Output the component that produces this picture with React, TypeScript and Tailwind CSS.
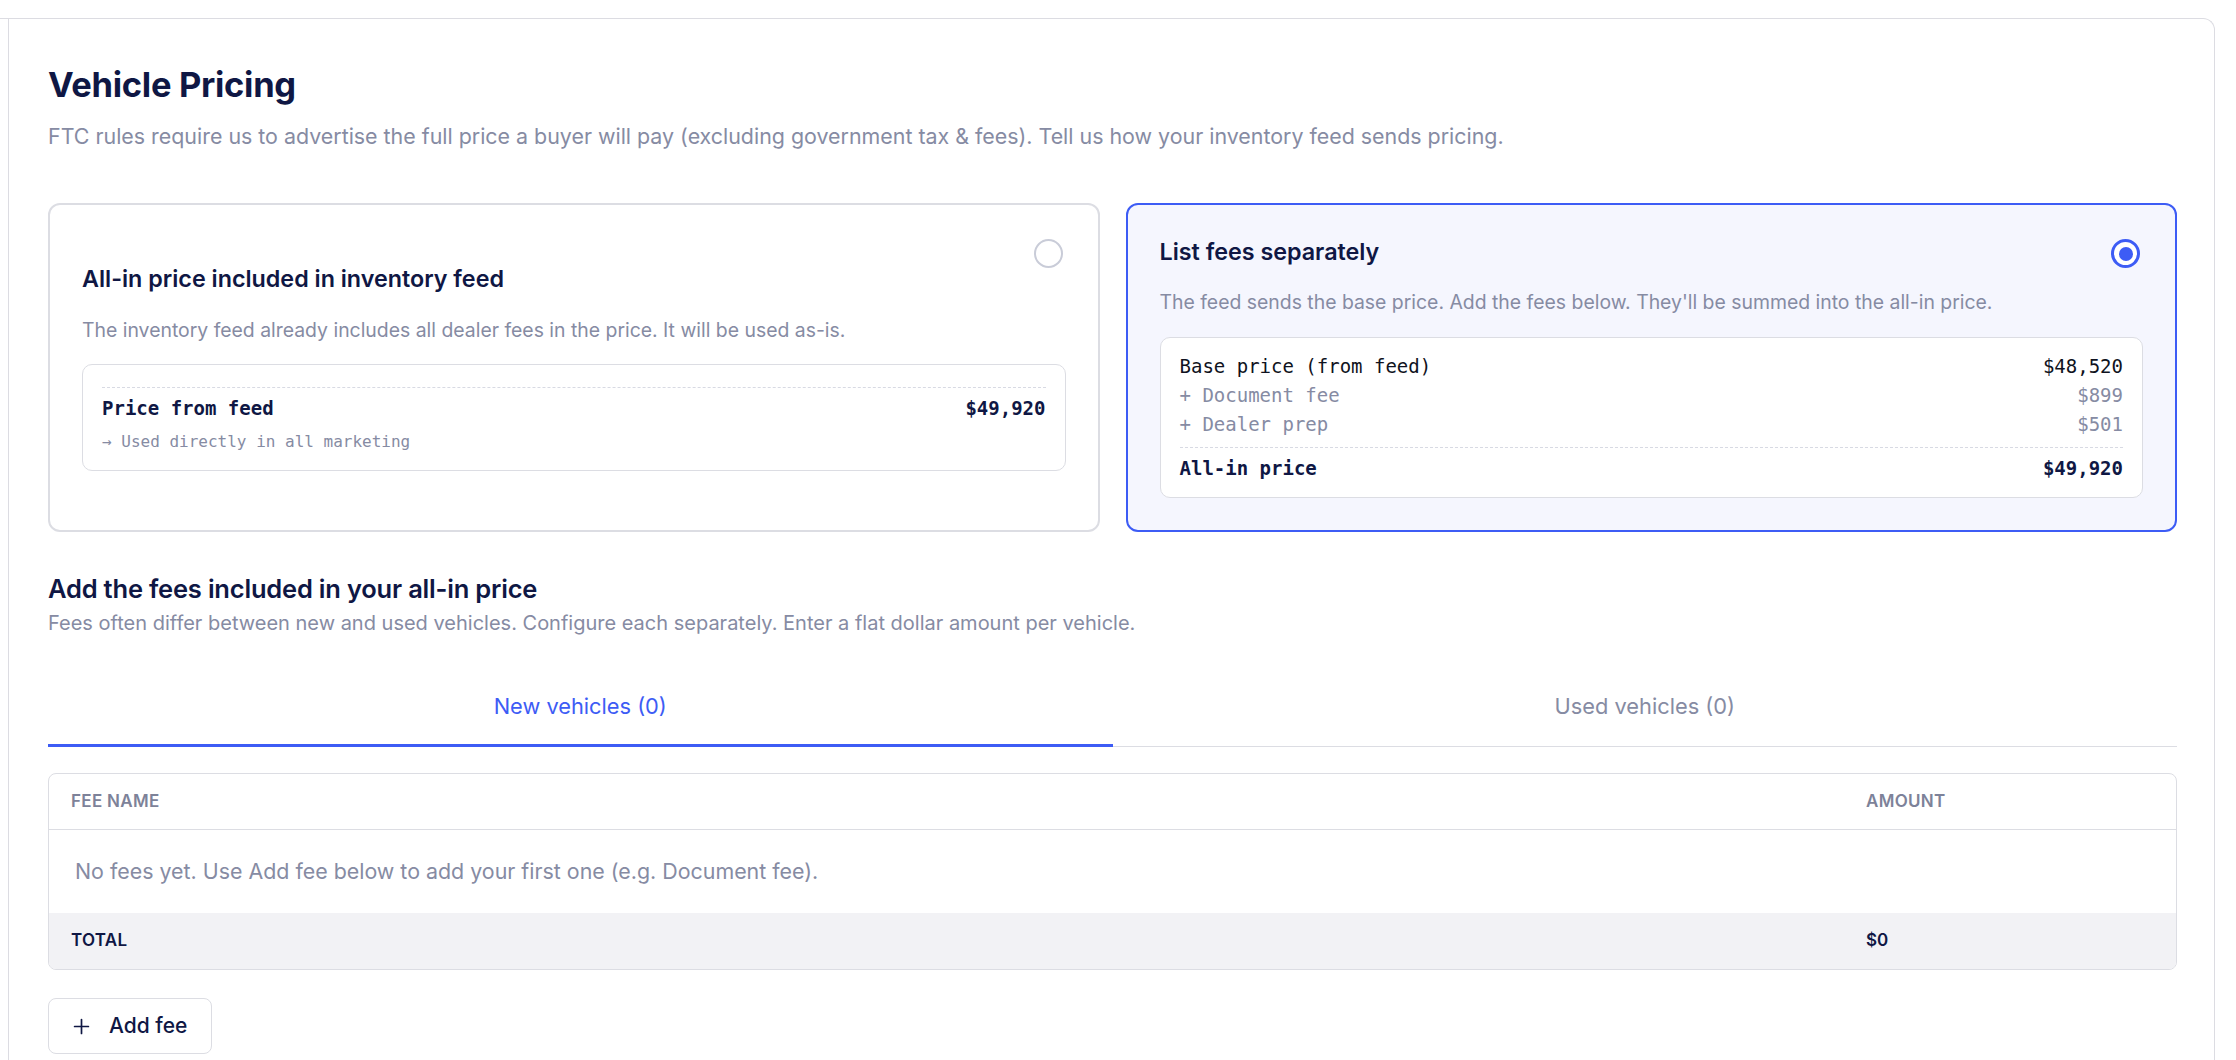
import React, { useState } from 'react';

const sans = { fontFamily: 'Inter, "Noto Sans", sans-serif' };
const mono = { fontFamily: '"DejaVu Sans Mono", "Liberation Mono", monospace' };

const Radio = ({ checked }: { checked: boolean }) => {
   return (
      <div className={'absolute top-[34px] right-[35px] w-[29px] h-[29px] rounded-full flex items-center justify-center ' + (checked ? 'border-[3px] border-[#3d5cf5] bg-white' : 'border-[2.5px] border-[#c9ccd8] bg-white')}>
         {checked && <div className="w-[14px] h-[14px] rounded-full bg-[#3d5cf5]"></div>}
      </div>
   )
}

const App = () => {
   const [mode, setMode] = useState('separate');
   const [tab, setTab] = useState('new');

   return (
      <div className="min-h-[1060px] bg-white pt-[18px] pr-[21px] text-[#0f1744]" style={sans}>
         <div className="border-t border-r border-[#dcdce2] rounded-tr-[12px] min-h-[1042px]">
            <div className="ml-[8px] border-l border-[#dcdce2] min-h-[1042px] pl-[39px] pr-[37px] pt-[46px] pb-[40px]">
               <h1 className="text-[34.5px] leading-[40px] font-bold tracking-[-0.3px]">Vehicle Pricing</h1>
               <p className="mt-[16px] text-[21.4px] leading-[30px] text-[#868ba3]">FTC rules require us to advertise the full price a buyer will pay (excluding government tax &amp; fees). Tell us how your inventory feed sends pricing.</p>

               <div className="mt-[52px] grid grid-cols-2 gap-[26px]">
                  <div onClick={() => setMode('allin')} className={'relative rounded-[12px] border-2 p-8 flex flex-col justify-center cursor-pointer ' + (mode === 'allin' ? 'border-[#3d5cf5] bg-[#f5f6fe]' : 'border-[#dcdde3] bg-white')}>
                     <Radio checked={mode === 'allin'} />
                     <h3 className="text-[23.3px] leading-[30px] font-semibold">All-in price included in inventory feed</h3>
                     <p className="mt-[22px] text-[19.4px] leading-[28px] text-[#868ba3]">The inventory feed already includes all dealer fees in the price. It will be used as-is.</p>
                     <div className="mt-[20px] rounded-[10px] border border-[#dcdde3] bg-white px-[19px] pt-[22px] pb-[16px]" style={mono}>
                        <div className="border-t border-dashed border-[#d8dae3] pt-[6px] flex justify-between text-[19px] leading-[29px] font-bold">
                           <span>Price from feed</span>
                           <span>$49,920</span>
                        </div>
                        <div className="mt-[7px] text-[16px] leading-[24px] text-[#868ba3]">→ Used directly in all marketing</div>
                     </div>
                  </div>

                  <div onClick={() => setMode('separate')} className={'relative rounded-[12px] border-2 p-8 flex flex-col justify-center cursor-pointer ' + (mode === 'separate' ? 'border-[#3d5cf5] bg-[#f5f6fe]' : 'border-[#dcdde3] bg-white')}>
                     <Radio checked={mode === 'separate'} />
                     <h3 className="text-[23.3px] leading-[30px] font-semibold">List fees separately</h3>
                     <p className="mt-[21px] text-[19.4px] leading-[28px] text-[#868ba3]">The feed sends the base price. Add the fees below. They'll be summed into the all-in price.</p>
                     <div className="mt-[21px] rounded-[10px] border border-[#dcdde3] bg-white px-[19px] pt-[14px] pb-[14px] text-[19px] leading-[29px]" style={mono}>
                        <div className="flex justify-between text-[#0f1220]">
                           <span>Base price (from feed)</span>
                           <span>$48,520</span>
                        </div>
                        <div className="flex justify-between text-[#868ba3]">
                           <span>+ Document fee</span>
                           <span>$899</span>
                        </div>
                        <div className="flex justify-between text-[#868ba3]">
                           <span>+ Dealer prep</span>
                           <span>$501</span>
                        </div>
                        <div className="mt-[8px] border-t border-dashed border-[#d8dae3] pt-[6px] flex justify-between font-bold">
                           <span>All-in price</span>
                           <span>$49,920</span>
                        </div>
                     </div>
                  </div>
               </div>

               <h2 className="mt-[41px] text-[25.5px] leading-[32px] font-semibold tracking-[-0.2px]">Add the fees included in your all-in price</h2>
               <p className="mt-[4px] text-[20px] leading-[28px] text-[#868ba3]">Fees often differ between new and used vehicles. Configure each separately. Enter a flat dollar amount per vehicle.</p>

               <div className="mt-[30px] flex border-b border-[#dcdde3]">
                  <button onClick={() => setTab('new')} className={'flex-1 -mb-px pt-[24px] pb-[23px] text-[21.8px] leading-[30px] border-b-[3px] ' + (tab === 'new' ? 'border-[#3d5cf5] text-[#3d5cf5]' : 'border-transparent text-[#868ba3]')}>New vehicles (0)</button>
                  <button onClick={() => setTab('used')} className={'flex-1 -mb-px pt-[24px] pb-[23px] text-[21.8px] leading-[30px] border-b-[3px] ' + (tab === 'used' ? 'border-[#3d5cf5] text-[#3d5cf5]' : 'border-transparent text-[#868ba3]')}>Used vehicles (0)</button>
               </div>

               <div className="mt-[26px] rounded-[8px] border border-[#dcdde3] overflow-hidden">
                  <div className="grid grid-cols-[1fr_310px] h-[56px] items-center border-b border-[#dcdde3] text-[17px] font-semibold tracking-[0.3px] uppercase text-[#7d8299]">
                     <div className="pl-[22px]">Fee name</div>
                     <div>Amount</div>
                  </div>
                  <div className="h-[83px] flex items-center pl-[26px] text-[21.4px] text-[#868ba3]">No fees yet. Use Add fee below to add your first one (e.g. Document fee).</div>
                  <div className="grid grid-cols-[1fr_310px] h-[56px] items-center bg-[#f2f2f5] text-[17px] font-semibold">
                     <div className="pl-[22px] uppercase tracking-[0.3px]">Total</div>
                     <div>$0</div>
                  </div>
               </div>

               <button className="mt-[28px] h-[56px] w-[164px] rounded-[8px] border border-[#dcdde3] bg-white flex items-center pl-[24px] gap-[19px] text-[21px] font-medium">
                  <svg width="17" height="17" viewBox="0 0 16 16" fill="none" stroke="currentColor" strokeWidth="1.6" strokeLinecap="round">
                     <path d="M8 1.5v13M1.5 8h13" />
                  </svg>
                  Add fee
               </button>
            </div>
         </div>
      </div>
   )
}

export default App;
